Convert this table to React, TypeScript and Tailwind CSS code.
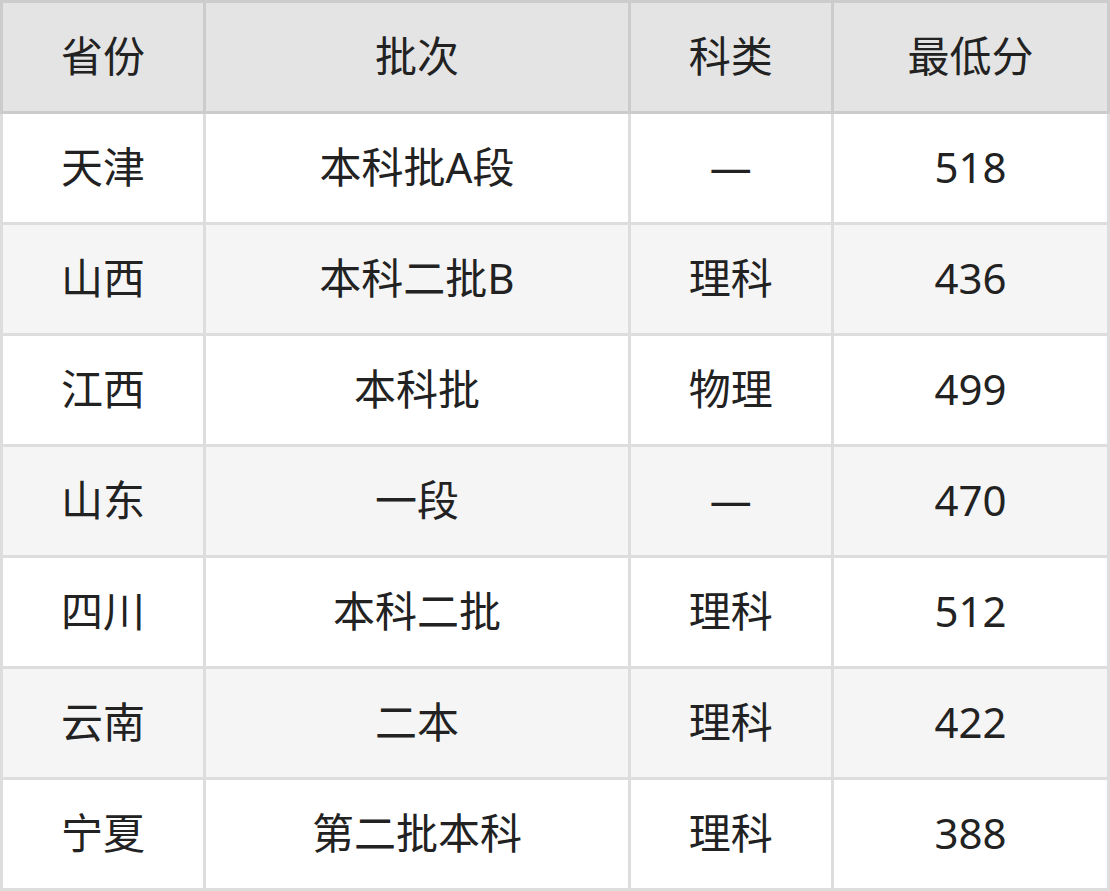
const rows = [
  ["天津", "本科批A段", "—", "518"],
  ["山西", "本科二批B", "理科", "436"],
  ["江西", "本科批", "物理", "499"],
  ["山东", "一段", "—", "470"],
  ["四川", "本科二批", "理科", "512"],
  ["云南", "二本", "理科", "422"],
  ["宁夏", "第二批本科", "理科", "388"],
];

const headers = ["省份", "批次", "科类", "最低分"];
const widths = ["w-[201px]", "w-[420px]", "w-[201px]", "w-[273px]"];

export default function App() {
  return (
    <div
      className="w-[1110px] h-[891px] bg-white text-[#222]"
      style={{ fontFamily: '"Noto Sans", "Noto Sans CJK SC", sans-serif' }}
    >
      <table className="border-collapse table-fixed w-[1110px] text-[42px]">
        <thead>
          <tr className="bg-[#e4e4e4]">
            {headers.map((h, i) => (
              <th
                key={h}
                className={`${widths[i]} h-[111px] border-[3px] border-[#cccccc] font-normal text-center p-0 pb-1`}
              >
                {h}
              </th>
            ))}
          </tr>
        </thead>
        <tbody>
          {rows.map((r, ri) => (
            <tr key={r[0]} className={ri % 2 === 1 ? "bg-[#f5f5f5]" : "bg-white"}>
              {r.map((c, ci) => (
                <td
                  key={ci}
                  className="h-[111px] border-[3px] border-[#dddddd] text-center p-0 pb-1"
                >
                  {c}
                </td>
              ))}
            </tr>
          ))}
        </tbody>
      </table>
    </div>
  );
}
